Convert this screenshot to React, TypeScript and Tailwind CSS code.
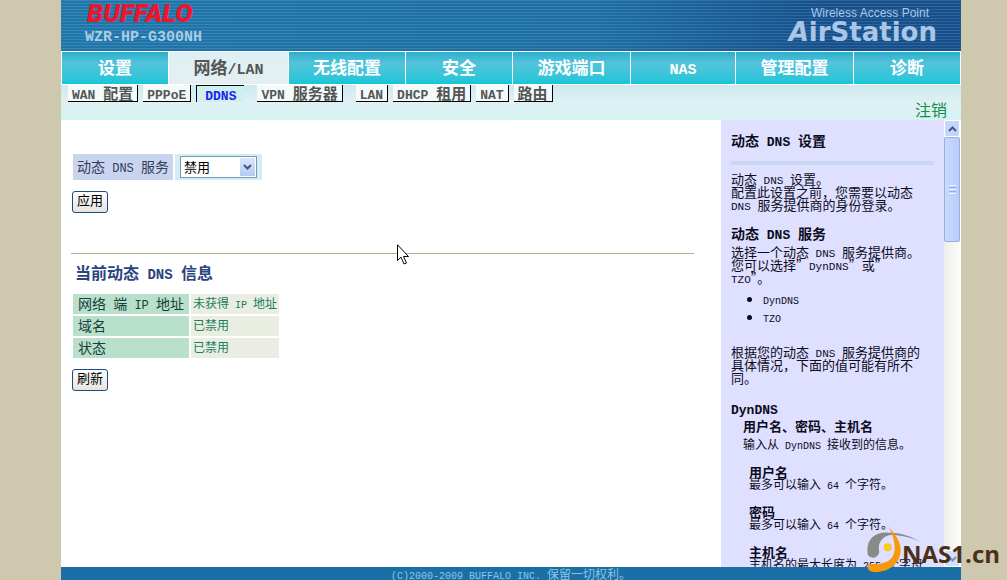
import React from "react";
import clsx from "clsx";

const navItems = ["设置", "网络/LAN", "无线配置", "安全", "游戏端口", "NAS", "管理配置", "诊断"];

const subItems = [
  { label: "WAN 配置" },
  { label: "PPPoE" },
  { label: "DDNS", active: true, gapAfter: true },
  { label: "VPN 服务器", gapAfter: true },
  { label: "LAN" },
  { label: "DHCP 租用" },
  { label: "NAT" },
  { label: "路由" },
];

const statusRows = [
  ["网络 端 IP 地址", "未获得 IP 地址"],
  ["域名", "已禁用"],
  ["状态", "已禁用"],
];

const latinSizes = {
  xs: "text-[10px]",
  sm: "text-[11px]",
  md: "text-[12px]",
  lg: "text-[13px]",
  xl: "text-[14px]",
  "2xl": "text-[15px]",
};

// Half-width runs are set in a mono face so that they take half a Chinese character each.
function Mixed({ children, size }: { children: string; size: keyof typeof latinSizes }) {
  return (
    <>
      {children.split(/([\x20-\x7e]+)/).map((part, i) =>
        i % 2 === 1 ? (
          <span
            key={i}
            className={clsx("font-['Liberation_Mono',monospace] leading-[0px]", latinSizes[size])}
          >
            {part}
          </span>
        ) : (
          part
        ),
      )}
    </>
  );
}

function Header() {
  return (
    <header className="flex h-[51px] shrink-0 justify-between bg-[repeating-linear-gradient(to_bottom,rgba(255,255,255,0.12)_0px,rgba(255,255,255,0.12)_1px,transparent_1px,transparent_3px),linear-gradient(to_right,#1f76ab,#1c6ea5_60%,#15508c_85%)] pl-6 pr-6">
      <div>
        <div className="pl-[2px] font-[Roboto,sans-serif] text-[26px] font-black italic leading-[26px] text-[#f0142a]">
          BUFFALO
        </div>
        <div className="pt-1 font-['Liberation_Mono',monospace] text-[15px] font-bold leading-4 text-[#a9cde4]">
          WZR-HP-G300NH
        </div>
      </div>
      <div className="pt-[6px] text-right text-[#aac6e6]">
        <div className="pr-2 font-['Liberation_Sans',sans-serif] text-[12px] leading-[14px]">
          Wireless Access Point
        </div>
        <div className="font-['DejaVu_Sans',sans-serif] text-[26px] font-bold leading-[24px]">
          <span className="italic">A</span>irStation
        </div>
      </div>
    </header>
  );
}

function MainNav() {
  return (
    <nav className="grid h-[34px] shrink-0 grid-cols-[107fr_120fr_117fr_107fr_118fr_105fr_118fr_107fr] border-y border-r border-white">
      {navItems.map((item, i) => (
        <a
          key={item}
          href="#"
          className={clsx(
            "border-l border-white text-center text-[17px] font-bold leading-[30px]",
            i === 1
              ? "bg-gradient-to-b from-[#ddf0f3] to-[#e4eff2] text-[#555]"
              : "bg-gradient-to-b from-[#28b0cc] via-[#52c3da] via-35% to-[#12c6d8] text-white",
          )}
        >
          <Mixed size="2xl">{item}</Mixed>
        </a>
      ))}
    </nav>
  );
}

function SubNav() {
  return (
    <div className="flex h-[35px] shrink-0 items-start justify-between bg-gradient-to-b from-[#cfe9ee] via-[#dff1f4] to-[#d5f2f2] pl-[7px] pr-[14px]">
      <nav className="flex items-start gap-[5px]">
        {subItems.map((item) => (
          <a
            key={item.label}
            href="#"
            className={clsx(
              "whitespace-nowrap text-[15px] font-bold leading-4",
              item.gapAfter && "mr-2",
              item.active
                ? "border-l border-t border-black bg-[#cdf0f0] px-2 text-[#2222ee]"
                : "border-b border-r border-black bg-[#f2fafa] px-1 text-[#555]",
            )}
          >
            <Mixed size="lg">{item.label}</Mixed>
          </a>
        ))}
      </nav>
      <a href="#" className="pt-4 text-[16px] leading-4 text-[#159048]">
        注销
      </a>
    </div>
  );
}

function FormButton({ children }: { children: string }) {
  return (
    <button className="flex h-[22px] items-start rounded-[3px] border border-[#1c4a82] bg-gradient-to-b from-white to-[#e6e4dc] px-1 text-[13px] leading-4 text-black">
      {children}
    </button>
  );
}

function Settings() {
  return (
    <main className="min-w-0 flex-1 bg-white pl-[10px] pr-[27px] pt-[34px]">
      <div className="flex gap-[2px] pl-[2px]">
        <label
          htmlFor="ddns-service"
          className="h-[26px] whitespace-nowrap bg-[#c9d4ee] px-1 text-[14px] leading-6 text-[#333d60]"
        >
          <Mixed size="md">动态 DNS 服务</Mixed>
        </label>
        <div className="flex h-[26px] items-center bg-[#d5ecf3] px-[5px]">
          <div className="relative">
            <select
              id="ddns-service"
              defaultValue="off"
              className="block h-[22px] w-[77px] appearance-none border border-[#6f9db9] bg-white pl-[3px] text-[13px] leading-5 text-black"
            >
              <option value="off">禁用</option>
              <option value="dyndns">DynDNS</option>
              <option value="tzo">TZO</option>
            </select>
            <span className="pointer-events-none absolute inset-y-[2px] right-[2px] flex w-[15px] items-center justify-center bg-gradient-to-b from-[#dbe5fd] to-[#b4c9f5]">
              <svg width="9" height="6" viewBox="0 0 9 6" fill="none" stroke="#43597e" strokeWidth="2">
                <path d="M1 1l3.500 3.500L8 1" />
              </svg>
            </span>
          </div>
        </div>
      </div>

      <div className="pl-px pt-[11px]">
        <FormButton>应用</FormButton>
      </div>

      <hr className="mt-10 border-[#b3b28d]" />

      <h2 className="pl-1 pt-2 text-[16px] font-bold leading-5 text-[#2a4480]">
        <Mixed size="xl">当前动态 DNS 信息</Mixed>
      </h2>

      <table className="mt-[10px] border-separate border-spacing-[2px]">
        <tbody>
          {statusRows.map(([name, value]) => (
            <tr key={name}>
              <th
                scope="row"
                className="h-5 bg-[#b9e0cb] px-[5px] py-0 text-left align-top text-[14px] font-normal leading-[18px] text-[#153f3a]"
              >
                <Mixed size="md">{name}</Mixed>
              </th>
              <td className="h-5 bg-[#eaeee2] px-[2px] py-0 align-top text-[12px] leading-[18px] text-[#15805e]">
                <Mixed size="xs">{value}</Mixed>
              </td>
            </tr>
          ))}
        </tbody>
      </table>

      <div className="pl-px pt-[9px]">
        <FormButton>刷新</FormButton>
      </div>
    </main>
  );
}

function HelpHeading({ children }: { children: string }) {
  return (
    <h3 className="text-[14px] font-bold leading-5">
      <Mixed size="lg">{children}</Mixed>
    </h3>
  );
}

function HelpField({ name, lines }: { name: string; lines: string }) {
  return (
    <div className="mt-4 pl-[18px]">
      <h4 className="text-[13px] font-bold leading-3">{name}</h4>
      <p className="whitespace-nowrap text-[12px] leading-3">
        <Mixed size="xs">{lines}</Mixed>
      </p>
    </div>
  );
}

function HelpPanel() {
  return (
    <aside className="flex w-[240px] shrink-0 overflow-hidden bg-[#dfdfff] text-[#0c0c1c]">
      <div className="min-w-0 flex-1 overflow-hidden px-[10px] pt-[10px] text-[13px] leading-[13px]">
        <HelpHeading>动态 DNS 设置</HelpHeading>
        <hr className="mb-[7px] mt-[11px] border-t-4 border-[#c9d8f2]" />
        <p className="pr-3">
          <Mixed size="sm">动态 DNS 设置。</Mixed>
          <br />
          <Mixed size="sm">配置此设置之前，您需要以动态 DNS 服务提供商的身份登录。</Mixed>
        </p>
        <div className="mt-3">
          <HelpHeading>动态 DNS 服务</HelpHeading>
        </div>
        <p className="mt-[2px] pr-3">
          <Mixed size="sm">选择一个动态 DNS 服务提供商。</Mixed>
          <br />
          <Mixed size="sm">您可以选择”DynDNS”或”</Mixed>
          <br />
          <Mixed size="sm">TZO”。</Mixed>
        </p>
        <ul className="mt-[6px] list-disc pl-8 text-[12px] leading-[18px]">
          <li>
            <Mixed size="xs">DynDNS</Mixed>
          </li>
          <li>
            <Mixed size="xs">TZO</Mixed>
          </li>
        </ul>
        <p className="mt-[19px] pr-3">
          <Mixed size="sm">根据您的动态 DNS 服务提供商的具体情况，下面的值可能有所不同。</Mixed>
        </p>
        <div className="mt-[14px]">
          <HelpHeading>DynDNS</HelpHeading>
        </div>
        <div className="whitespace-nowrap pl-3">
          <h4 className="font-bold leading-4">用户名、密码、主机名</h4>
          <p className="text-[12px] leading-5">
            <Mixed size="xs">输入从 DynDNS 接收到的信息。</Mixed>
          </p>
        </div>
        <div className="-mt-1">
          <HelpField name="用户名" lines="最多可以输入 64 个字符。" />
          <HelpField name="密码" lines="最多可以输入 64 个字符。" />
          <HelpField name="主机名" lines="主机名的最大长度为 255 个字母" />
        </div>
      </div>
      <div className="flex w-[17px] shrink-0 flex-col border-r border-white bg-gradient-to-r from-[#f0eeea] to-[#fdfdfb]">
        <div className="flex h-[17px] shrink-0 items-center justify-center rounded-[2px] border border-white bg-[#c3d5fb]">
          <svg width="9" height="6" viewBox="0 0 9 6" fill="none" stroke="#43597e" strokeWidth="2">
            <path d="M1 5l3.500-3.500L8 5" />
          </svg>
        </div>
        <div className="flex h-[105px] shrink-0 flex-col items-center justify-center gap-px rounded-[2px] border border-[#98b0e0] bg-gradient-to-r from-[#cbdafd] to-[#b8cdf9]">
          <span className="h-px w-[7px] bg-[#eef4fe]" />
          <span className="h-px w-[7px] bg-[#8cb0f8]" />
          <span className="h-px w-[7px] bg-[#eef4fe]" />
          <span className="h-px w-[7px] bg-[#8cb0f8]" />
          <span className="h-px w-[7px] bg-[#eef4fe]" />
        </div>
        <div className="mt-auto flex h-[17px] shrink-0 items-center justify-center rounded-[2px] border border-white bg-[#d3e0fb]">
          <svg width="9" height="6" viewBox="0 0 9 6" fill="none" stroke="#6f8fc8" strokeWidth="2">
            <path d="M1 1l3.500 3.500L8 1" />
          </svg>
        </div>
      </div>
    </aside>
  );
}

function Watermark() {
  return (
    <div className="pointer-events-none absolute bottom-[7px] right-[7px] flex items-end">
      <svg width="55" height="48" viewBox="20 0 165 144" className="-mr-5" aria-hidden="true">
        <path
          d="M22 88C16 45 40 20 85 23C125 22 155 36 183 52C150 36 115 29 90 30C68 34 52 52 56 76C58 88 50 96 42 98C30 98 24 95 22 88z"
          fill="#8a8a88"
        />
        <path
          d="M84 2C95 22 121 40 121 75C121 115 85 142 45 141C28 141 20 132 22 122C25 112 50 122 75 112C110 98 112 60 84 2z"
          fill="#f7990c"
        />
        <circle cx="82" cy="67" r="12" fill="#f8cc18" />
      </svg>
      <div className="pb-[3px] font-['Open_Sans',sans-serif] text-[24px] font-bold leading-[32px] text-[#4b2f1b]">
        NAS1.cn
      </div>
    </div>
  );
}

function Cursor() {
  return (
    <svg
      width="13"
      height="21"
      viewBox="0 0 13 21"
      className="pointer-events-none absolute left-[397px] top-[244px]"
      aria-hidden="true"
    >
      <path d="M.5.800v15.700l3.500-3.400 3 6.900 2.500-1-3-6.500h5z" fill="#fff" stroke="#000" />
    </svg>
  );
}

export default function App() {
  return (
    <div
      lang="zh-CN"
      className="relative flex h-screen flex-col overflow-hidden bg-[#cdc8ae] pl-[61px] pr-[46px] font-['Noto_Sans_CJK_SC',sans-serif]"
    >
      <Header />
      <MainNav />
      <SubNav />
      <div className="flex min-h-0 flex-1">
        <Settings />
        <HelpPanel />
      </div>
      <footer className="h-[13px] shrink-0 bg-[#1a70a6] text-center text-[12px] leading-[13px] text-[#8cc4e4]">
        <Mixed size="xs">(C)2000-2009 BUFFALO INC. 保留一切权利。</Mixed>
      </footer>
      <Watermark />
      <Cursor />
    </div>
  );
}
